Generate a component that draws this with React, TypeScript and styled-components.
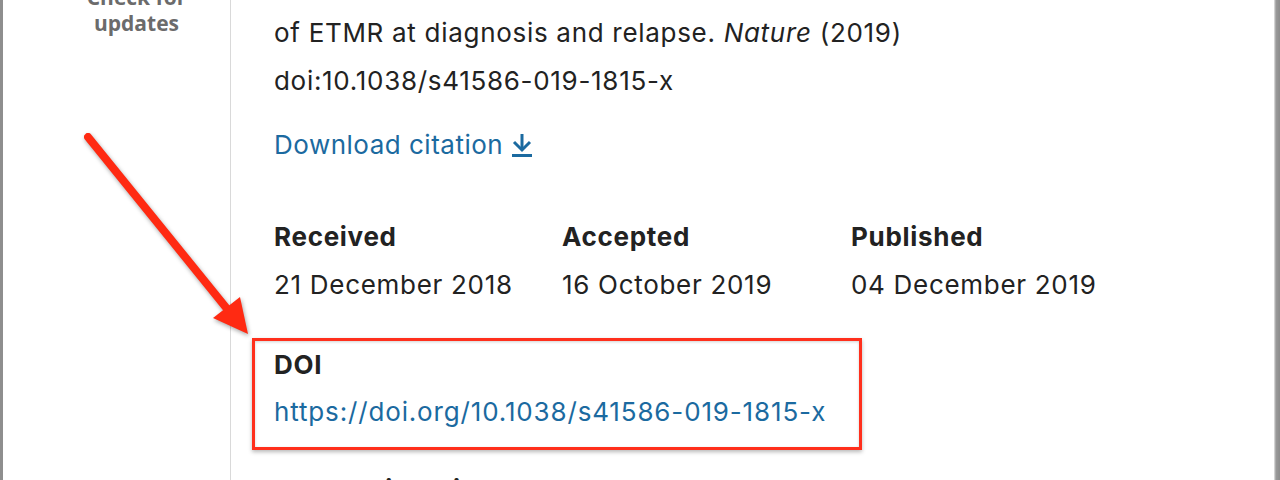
import React from "react";
import styled, { createGlobalStyle } from "styled-components";

const Global = createGlobalStyle`
  html, body { margin: 0; padding: 0; background: #ffffff; }
  body { width: 1280px; height: 480px; overflow: hidden; font-family: Inter, "Liberation Sans", Arial, sans-serif; }
  #root { width: 1280px; height: 480px; }
`;

const Page = styled.div`
  position: relative;
  display: flex;
  width: 1280px;
  height: 480px;
  overflow: hidden;
  background: #fff;
`;

const FrameEdge = styled.div<{ $side: "left" | "right" }>`
  flex: 0 0 ${(p) => (p.$side === "left" ? 3 : 6)}px;
  background: ${(p) =>
    p.$side === "left"
      ? "#8e8e8e"
      : "linear-gradient(to right, #e6e6e6 0px, #9a9a9a 2px, #8c8c8c 100%)"};
`;

const Sidebar = styled.aside`
  flex: 0 0 227px;
  border-right: 1px solid #d9d9d9;
  display: flex;
  justify-content: center;
`;

const UpdatesBadge = styled.div`
  margin-top: -16px;
  padding-left: 40px;
  font-family: "Open Sans", "Liberation Sans", Arial, sans-serif;
  font-weight: 700;
  font-size: 21px;
  line-height: 26px;
  color: #6b6b6b;
  text-align: center;
`;

const Main = styled.main`
  flex: 1;
  padding: 9px 0 0 43px;
  color: #222;
  font-size: 26px;
  letter-spacing: 0.7px;
  line-height: 48px;
  white-space: nowrap;
`;

const Citation = styled.p`
  margin: 0;
`;

const DownloadLink = styled.a`
  display: inline-flex;
  align-items: center;
  gap: 8px;
  margin-top: 16px;
  color: #1b6aa0;
  text-decoration: none;
  letter-spacing: 0.5px;
`;

const DatesGrid = styled.div`
  display: grid;
  grid-template-columns: 288px 289px 288px;
  margin-top: 44px;
`;

const Label = styled.div`
  font-weight: 700;
`;

const DoiBox = styled.div`
  box-sizing: border-box;
  width: 610px;
  margin: 29px 0 0 -22px;
  padding: 0 19px 12px;
  line-height: 47px;
  border: 3px solid #ff2f1c;
  box-shadow: 0 2px 4px rgba(0, 0, 0, 0.28), inset 0 1px 3px rgba(0, 0, 0, 0.18);
`;

const DoiLink = styled.a`
  color: #1b6aa0;
  text-decoration: none;
  letter-spacing: 0.85px;
`;

const NextHeading = styled.div`
  margin-top: 16px;
  font-weight: 700;
`;

const ArrowLayer = styled.svg`
  position: absolute;
  left: 0;
  top: 0;
  pointer-events: none;
  filter: drop-shadow(1px 2px 2px rgba(0, 0, 0, 0.35));
`;

const DownloadIcon = () => (
  <svg width="22" height="24" viewBox="0 0 22 24" fill="none" stroke="currentColor" strokeWidth="3">
    <path d="M11 1 V16" />
    <path d="M3 9 L11 17 L19 9" strokeLinejoin="miter" />
    <path d="M1 22.5 H21" />
  </svg>
);

export default function App() {
  return (
    <>
      <Global />
      <Page>
        <FrameEdge $side="left" />
        <Sidebar>
          <UpdatesBadge>
            Check for
            <br />
            updates
          </UpdatesBadge>
        </Sidebar>
        <Main>
          <Citation>
            of ETMR at diagnosis and relapse. <i>Nature</i> (2019)
            <br />
            doi:10.1038/s41586-019-1815-x
          </Citation>
          <DownloadLink href="#">
            Download citation
            <DownloadIcon />
          </DownloadLink>
          <DatesGrid>
            <Label>Received</Label>
            <Label>Accepted</Label>
            <Label>Published</Label>
            <div>21 December 2018</div>
            <div>16 October 2019</div>
            <div>04 December 2019</div>
          </DatesGrid>
          <DoiBox>
            <Label>DOI</Label>
            <DoiLink href="#">https://doi.org/10.1038/s41586-019-1815-x</DoiLink>
          </DoiBox>
          <NextHeading>Share this article</NextHeading>
        </Main>
        <FrameEdge $side="right" />
        <ArrowLayer width="1280" height="480" viewBox="0 0 1280 480">
          <line x1="88" y1="137" x2="228" y2="310" stroke="#ff2a12" strokeWidth="8" strokeLinecap="round" />
          <polygon points="213,318 240,297 248,334" fill="#ff2a12" />
        </ArrowLayer>
      </Page>
    </>
  );
}
